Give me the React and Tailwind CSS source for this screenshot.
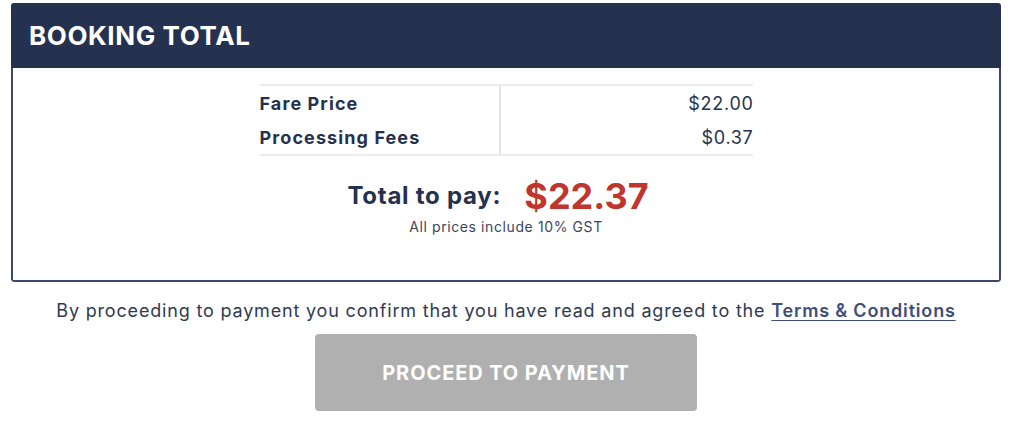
export default function App() {
  return (
    <div className="w-[1024px] h-[421px] bg-white" style={{ fontFamily: 'Inter, "Noto Sans", sans-serif' }}>
      <div className="pt-[3px] pl-[11px] pr-[23px]">
        <div className="rounded-[3px] overflow-hidden">
          <div className="h-[65px] bg-[#25324f] flex items-center px-[18px]">
            <h2 className="text-white font-bold text-[26px] tracking-[0.6px]">BOOKING TOTAL</h2>
          </div>
          <div className="border-2 border-t-0 border-[#3d4866] rounded-b-[3px] h-[214px] pt-[16px]">
            <div className="w-[493px] mx-auto border-y-2 border-[#ececec] text-[18px] text-[#25324f]">
              <div className="flex h-[34px] items-center">
                <div className="w-[241px] h-full flex items-center font-bold border-r-2 border-[#e2e2e2] tracking-[1.1px]">Fare Price</div>
                <div className="flex-1 text-right tracking-[0.7px] mr-[-1px]">$22.00</div>
              </div>
              <div className="flex h-[34px] items-center">
                <div className="w-[241px] h-full flex items-center font-bold border-r-2 border-[#e2e2e2] tracking-[1.1px]">Processing Fees</div>
                <div className="flex-1 text-right tracking-[0.7px] mr-[-1px]">$0.37</div>
              </div>
            </div>
            <div className="flex items-center justify-center gap-[23px] mt-[18px] h-[44px] pr-[16px]">
              <span className="text-[24px] font-bold text-[#25324f] tracking-[0.75px]">Total to pay:</span>
              <span className="text-[36px] font-bold text-[#c0362e]">$22.37</span>
            </div>
            <p className="text-center text-[14px] text-[#3a4560] tracking-[0.6px] mt-[-2px]">All prices include 10% GST</p>
          </div>
        </div>
        <p className="text-center text-[18px] text-[#2f3a55] mt-[15px] tracking-[0.82px]">
          By proceeding to payment you confirm that you have read and agreed to the{' '}
          <a className="font-semibold text-[#3e4e78] underline underline-offset-[3px]">Terms &amp; Conditions</a>
        </p>
        <div className="flex justify-center mt-[10px]">
          <button className="w-[382px] h-[77px] rounded-[4px] bg-[#b0b0b0] text-white font-bold text-[20px] tracking-[0.9px]">
            PROCEED TO PAYMENT
          </button>
        </div>
      </div>
    </div>
  );
}
